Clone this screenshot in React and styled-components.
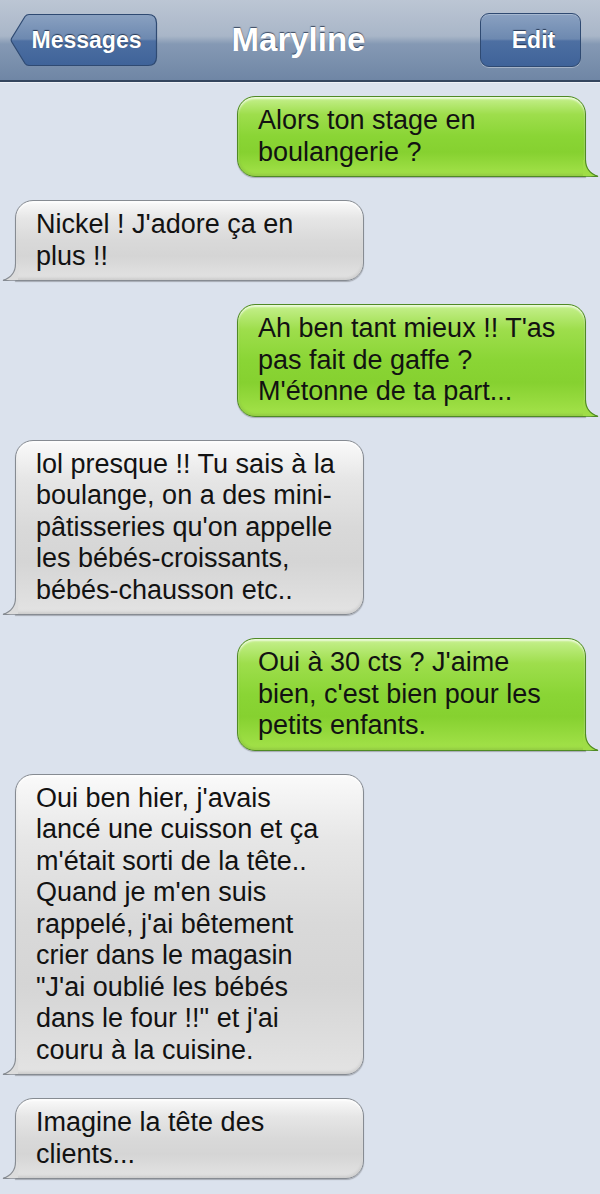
import React from "react";
import styled, { createGlobalStyle } from "styled-components";

const GlobalStyle = createGlobalStyle`
  body {
    margin: 0;
    background: #dbe2ed;
    font-family: "Liberation Sans", Arial, sans-serif;
  }
`;

const messages = [
  { from: "me", text: "Alors ton stage en\nboulangerie ?" },
  { from: "her", text: "Nickel ! J'adore ça en\nplus !!" },
  { from: "me", text: "Ah ben tant mieux !! T'as\npas fait de gaffe ?\nM'étonne de ta part..." },
  {
    from: "her",
    text: "lol presque !! Tu sais à la\nboulange, on a des mini-\npâtisseries qu'on appelle\nles bébés-croissants,\nbébés-chausson etc..",
  },
  { from: "me", text: "Oui à 30 cts ? J'aime\nbien, c'est bien pour les\npetits enfants." },
  {
    from: "her",
    text: "Oui ben hier, j'avais\nlancé une cuisson et ça\nm'était sorti de la tête..\nQuand je m'en suis\nrappelé, j'ai bêtement\ncrier dans le magasin\n\"J'ai oublié les bébés\ndans le four !!\" et j'ai\ncouru à la cuisine.",
  },
  { from: "her", text: "Imagine la tête des\nclients..." },
];

const Page = styled.div`
  width: 600px;
  min-height: 1194px;
  background: #dbe2ed;
`;

const NavBar = styled.div`
  height: 82px;
  box-sizing: border-box;
  display: grid;
  grid-template-columns: 1fr auto 1fr;
  align-items: center;
  padding: 0 19px 0 10px;
  background: linear-gradient(to bottom, #bcc6d4 0%, #a9b6c8 45%, #8599b4 55%, #6f86a5 100%);
  border-bottom: 2px solid #34455e;
  box-shadow: 0 1px 0 #eef1f6;
`;

const Title = styled.div`
  color: #fff;
  font-weight: bold;
  font-size: 33px;
  text-shadow: 0 -1px 1px rgba(30, 45, 70, 0.8);
  padding-left: 6px;
`;

const BackButton = styled.div`
  position: relative;
  justify-self: start;
  width: 148px;
  height: 54px;
  display: flex;
  align-items: center;
  justify-content: center;
  padding-left: 5px;
  box-sizing: border-box;
  color: #fff;
  font-weight: bold;
  font-size: 23px;
  text-shadow: 0 -1px 1px rgba(20, 35, 60, 0.8);

  svg {
    position: absolute;
    inset: 0;
  }
  span {
    position: relative;
  }
`;

const EditButton = styled.div`
  justify-self: end;
  width: 101px;
  height: 54px;
  box-sizing: border-box;
  display: flex;
  align-items: center;
  justify-content: center;
  padding-left: 6px;
  border: 1px solid #2f4a72;
  border-radius: 9px;
  background: linear-gradient(to bottom, #8aa1c1 0%, #6d89b0 48%, #4d6fa2 52%, #3f6399 100%);
  box-shadow: inset 0 1px 0 rgba(255, 255, 255, 0.25), 0 1px 0 rgba(255, 255, 255, 0.35);
  color: #fff;
  font-weight: bold;
  font-size: 23px;
  text-shadow: 0 -1px 1px rgba(20, 35, 60, 0.8);
`;

const Thread = styled.div`
  display: flex;
  flex-direction: column;
  gap: 23px;
  padding: 14px 14px 18px 15px;
`;

const Bubble = styled.div`
  position: relative;
  align-self: ${(p) => (p.$mine ? "flex-end" : "flex-start")};
  width: 349px;
  box-sizing: border-box;
  padding: 8px 10px 8px 20px;
  border-radius: 18px;
  ${(p) => (p.$mine ? "border-bottom-right-radius: 0;" : "border-bottom-left-radius: 0;")}
  font-size: 27px;
  line-height: 31.5px;
  color: #121212;
  white-space: pre;
  border: 1px solid ${(p) => (p.$mine ? "#4f8a25" : "#868b92")};
  background: ${(p) =>
    p.$mine
      ? "linear-gradient(to bottom, #c6f08e 0%, #9ede4c 22%, #8ad535 50%, #86d130 70%, #a4e24a 100%)"
      : "linear-gradient(to bottom, #fafafa 0%, #e6e6e6 22%, #d9d9d9 50%, #d5d5d5 70%, #e3e3e3 100%)"};
  box-shadow: inset 0 2px 2px rgba(255, 255, 255, 0.7),
    inset 0 -2px 3px rgba(0, 0, 0, 0.1), 0 1px 1px rgba(0, 0, 0, 0.25);

  svg {
    position: absolute;
    bottom: -1px;
    ${(p) => (p.$mine ? "right: -14px; transform: scaleX(-1);" : "left: -14px;")}
  }
`;

const Tail = ({ mine }) => {
  const fill = mine ? "#9fdd46" : "#dcdcdc";
  const stroke = mine ? "#4f8a25" : "#868b92";
  return (
    <svg width="16" height="17" viewBox="0 0 16 17">
      <path d="M13 0 Q13 12 0.5 16.6 Q8 17.2 16 16 L16 0 Z" fill={fill} />
      <path
        d="M13.5 0 Q13.5 12 1 16.4 Q8 17 16 16.5"
        fill="none"
        stroke={stroke}
        strokeWidth="1.1"
      />
    </svg>
  );
};

const BackShape = () => (
  <svg width="148" height="54" viewBox="0 0 148 54">
    <defs>
      <linearGradient id="bk" x1="0" y1="0" x2="0" y2="1">
        <stop offset="0" stopColor="#8aa1c1" />
        <stop offset="0.48" stopColor="#6d89b0" />
        <stop offset="0.52" stopColor="#4d6fa2" />
        <stop offset="1" stopColor="#3f6399" />
      </linearGradient>
    </defs>
    <path
      d="M19 1.5 L138 1.5 Q146.5 1.5 146.5 10 L146.5 44 Q146.5 52.5 138 52.5 L19 52.5 Q16.5 52.5 15 50.5 L1.5 28.5 Q0.8 27 1.5 25.5 L15 3.5 Q16.5 1.5 19 1.5 Z"
      fill="url(#bk)"
      stroke="#2f4a72"
      strokeWidth="1.2"
    />
  </svg>
);

export default function App() {
  return (
    <Page>
      <GlobalStyle />
      <NavBar>
        <BackButton>
          <BackShape />
          <span>Messages</span>
        </BackButton>
        <Title>Maryline</Title>
        <EditButton>Edit</EditButton>
      </NavBar>
      <Thread>
        {messages.map((m, i) => (
          <Bubble key={i} $mine={m.from === "me"}>
            {m.text}
            <Tail mine={m.from === "me"} />
          </Bubble>
        ))}
      </Thread>
    </Page>
  );
}
